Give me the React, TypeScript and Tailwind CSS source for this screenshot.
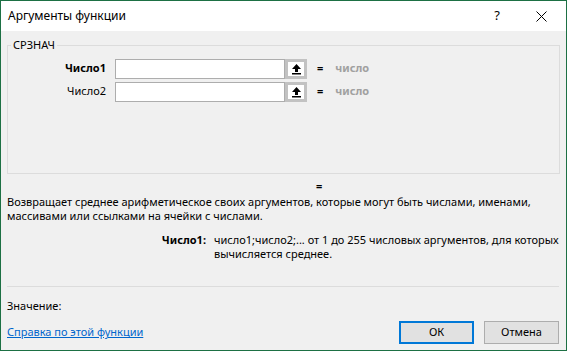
import React from 'react';

const font = { fontFamily: '"Noto Sans", "Liberation Sans", sans-serif' };

function UploadIcon() {
  return (
    <svg width="11" height="12" viewBox="0 0 11 12">
      <path d="M5.5 1 L10 6 L7 6 L7 9 L4 9 L4 6 L1 6 Z" fill="#000" />
      <rect x="1" y="10" width="9" height="1.5" fill="#000" />
    </svg>
  );
}

function ArgRow({ label, bold }: { label: string; bold?: boolean }) {
  return (
    <div className="flex items-center h-[20px]">
      <div className={`w-[98px] text-right text-[11px] text-black ${bold ? 'font-bold' : ''}`}>{label}</div>
      <div className="ml-[9px] w-[170px] h-[20px] bg-white border border-[#adadad]" />
      <div className="w-[22px] h-[20px] border-[3px] border-[#c2c2c2] bg-white flex items-center justify-center">
        <UploadIcon />
      </div>
      <div className="ml-[10px] text-[11px] font-bold text-black">=</div>
      <div className="ml-[12px] text-[11px] font-bold text-[#a0a0a0]">число</div>
    </div>
  );
}

export default function App() {
  return (
    <div style={font} className="w-[567px] h-[351px] border border-[#1d7044] bg-[#f0f0f0] flex flex-col text-black">
      {/* title bar */}
      <div className="h-[30px] bg-white flex items-center pl-[7px] pr-[19px] shrink-0">
        <div className="text-[12px]">Аргументы функции</div>
        <div className="ml-auto text-[13px]">?</div>
        <svg className="ml-[36px]" width="11" height="11" viewBox="0 0 11 11">
          <path d="M0.5 0.5 L10.5 10.5 M10.5 0.5 L0.5 10.5" stroke="#000" strokeWidth="1" />
        </svg>
      </div>

      <div className="flex flex-col px-[6px] flex-1">
        <fieldset className="mt-[6px] h-[137px] border border-[#dcdcdc] px-0">
          <legend className="ml-[3px] px-[2px] text-[11px]">СРЗНАЧ</legend>
          <div className="flex flex-col gap-[3px] mt-[5px]">
            <ArgRow label="Число1" bold />
            <ArgRow label="Число2" />
          </div>
        </fieldset>

        <div className="pl-[309px] mt-[5px] text-[11px] font-bold leading-[13px]">=</div>
        <div className="mt-[3px] text-[11px] leading-[14px]">
          Возвращает среднее арифметическое своих аргументов, которые могут быть числами, именами,
          <br />
          массивами или ссылками на ячейки с числами.
        </div>

        <div className="flex mt-[10px] text-[11px] leading-[14px]">
          <div className="w-[199px] text-right font-bold">Число1:</div>
          <div className="ml-[8px] w-[345px]">
            число1;число2;... от 1 до 255 числовых аргументов, для которых вычисляется среднее.
          </div>
        </div>

        <div className="mt-auto border-t border-[#dcdcdc] mr-[1px]" />
        <div className="mt-[12px] text-[11px] leading-[13px]">Значение:</div>

        <div className="flex items-center mt-[9px] mb-[6px]">
          <a href="#" className="text-[11px] text-[#0066cc] underline">
            Справка по этой функции
          </a>
          <button className="ml-auto w-[75px] h-[23px] bg-[#e1e1e1] border-2 border-[#0078d7] text-[11px]">ОК</button>
          <button className="ml-[10px] mr-[1px] w-[75px] h-[23px] bg-[#e1e1e1] border border-[#adadad] text-[11px]">Отмена</button>
        </div>
      </div>
    </div>
  );
}
